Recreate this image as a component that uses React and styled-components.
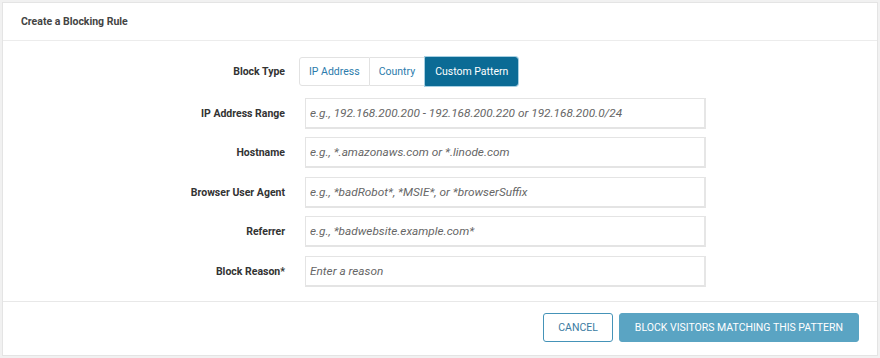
import React, { useState } from "react";
import styled, { createGlobalStyle } from "styled-components";

const GlobalStyle = createGlobalStyle`
  html, body {
    margin: 0;
    padding: 0;
    background: #f1f1f1;
    font-family: Roboto, "Liberation Sans", Arial, sans-serif;
  }
`;

const Page = styled.div`
  width: 880px;
  height: 358px;
  padding: 2px;
  box-sizing: border-box;
`;

const Card = styled.div`
  background: #fff;
  border: 1px solid #e4e4e4;
  height: 100%;
  box-sizing: border-box;
  display: flex;
  flex-direction: column;
`;

const Header = styled.div`
  height: 37px;
  display: flex;
  align-items: center;
  padding-left: 18px;
  border-bottom: 1px solid #ececec;
  font-size: 10.5px;
  font-weight: 700;
  color: #444;
`;

const Body = styled.div`
  padding: 15px 0 14px;
  display: grid;
  grid-template-columns: 282px 420px;
  column-gap: 14px;
  row-gap: 8.5px;
  align-content: start;
  border-bottom: 1px solid #e8e8e8;
`;

const Label = styled.label`
  display: flex;
  align-items: center;
  justify-content: flex-end;
  font-size: 10.5px;
  font-weight: 700;
  color: #333;
  height: ${(p) => p.h || 31}px;
`;

const Segment = styled.div`
  display: flex;
  height: 29px;
  margin-bottom: 3px;
  padding-top: 1px;
`;

const SegBtn = styled.button`
  font-family: inherit;
  font-size: 10.5px;
  height: 29px;
  padding: 0 ${(p) => p.pad}px;
  border: 1px solid ${(p) => (p.active ? "#0b6b95" : "#e2e2e2")};
  border-left-width: ${(p) => (p.first || p.active ? 1 : 0)}px;
  border-radius: ${(p) => (p.first ? "3px 0 0 3px" : p.last ? "0 3px 3px 0" : "0")};
  background: ${(p) => (p.active ? "#0b6b95" : "#fff")};
  color: ${(p) => (p.active ? "#fff" : "#2b7bac")};
  box-shadow: ${(p) => (p.active ? "0 0 0 1px #a6cfe2" : "none")};
  cursor: pointer;
  white-space: nowrap;
`;

const Input = styled.input`
  width: 401px;
  height: 31px;
  margin-left: 6px;
  box-sizing: border-box;
  border: 1px solid #e4e4e4;
  border-bottom: 2px solid #e4e4e4;
  border-right: 2px solid #e6e6e6;
  padding: 0 4px;
  font-family: inherit;
  font-size: 11.8px;
  color: #333;
  outline: none;
  &::placeholder {
    font-style: italic;
    color: #666;
  }
`;

const Footer = styled.div`
  flex: 1;
  display: flex;
  justify-content: flex-end;
  align-items: flex-start;
  gap: 6px;
  padding: 11px 18px 0 0;
`;

const Button = styled.button`
  height: 29px;
  padding: 0 ${(p) => p.pad}px;
  font-family: inherit;
  font-size: 10.5px;
  text-transform: uppercase;
  border-radius: 3px;
  cursor: pointer;
  border: 1px solid ${(p) => (p.primary ? "#5aa4c3" : "#4593b8")};
  background: ${(p) => (p.primary ? "#5aa4c3" : "#fff")};
  color: ${(p) => (p.primary ? "#fff" : "#3a7ca2")};
`;

const fields = [
  { label: "IP Address Range", ph: "e.g., 192.168.200.200 - 192.168.200.220 or 192.168.200.0/24" },
  { label: "Hostname", ph: "e.g., *.amazonaws.com or *.linode.com" },
  { label: "Browser User Agent", ph: "e.g., *badRobot*, *MSIE*, or *browserSuffix" },
  { label: "Referrer", ph: "e.g., *badwebsite.example.com*" },
];

const types = ["IP Address", "Country", "Custom Pattern"];

export default function App() {
  const [type, setType] = useState("Custom Pattern");
  return (
    <Page>
      <GlobalStyle />
      <Card>
        <Header>Create a Blocking Rule</Header>
        <Body>
          <Label h={31}>Block Type</Label>
          <Segment>
            {types.map((t, i) => (
              <SegBtn
                key={t}
                pad={9}
                first={i === 0}
                last={i === types.length - 1}
                active={type === t}
                onClick={() => setType(t)}
              >
                {t}
              </SegBtn>
            ))}
          </Segment>
          {fields.map((f) => (
            <React.Fragment key={f.label}>
              <Label>{f.label}</Label>
              <Input placeholder={f.ph} />
            </React.Fragment>
          ))}
          <Label>Block Reason*</Label>
          <Input placeholder="Enter a reason" />
        </Body>
        <Footer>
          <Button pad={14}>Cancel</Button>
          <Button primary pad={15}>Block visitors matching this pattern</Button>
        </Footer>
      </Card>
    </Page>
  );
}
